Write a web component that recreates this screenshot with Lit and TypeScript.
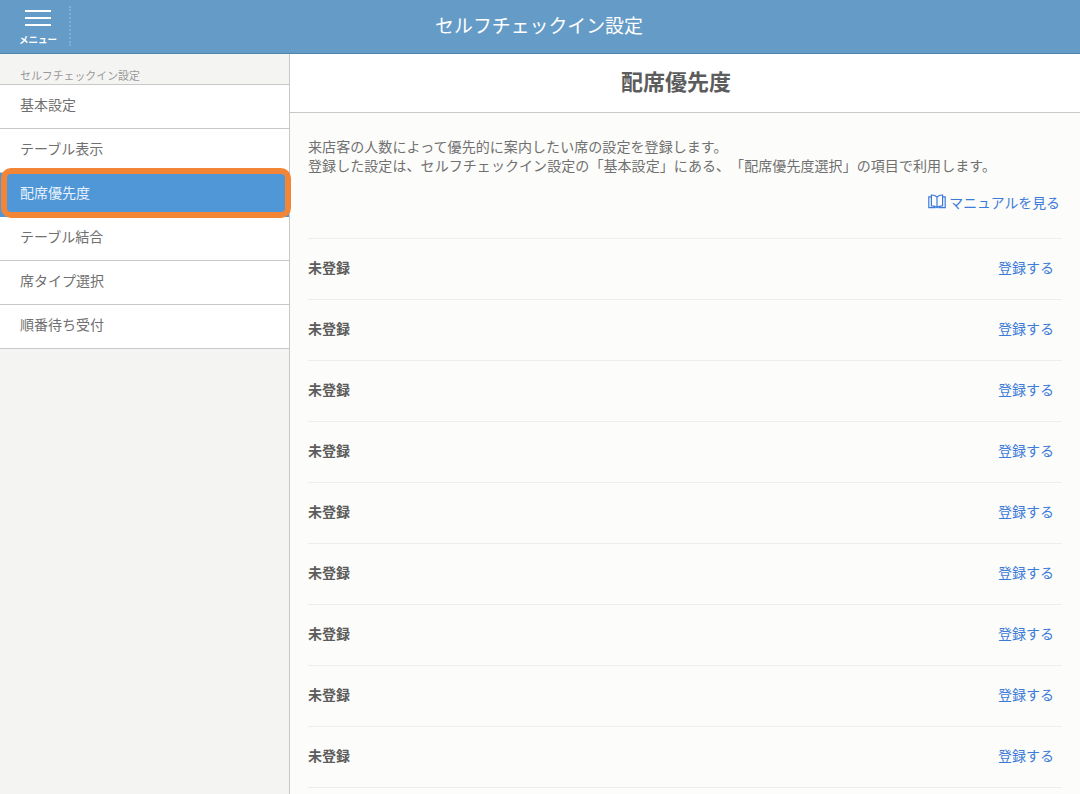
import { LitElement, html, css, svg } from "lit";
import { customElement } from "lit/decorators.js";

const NAV = ["基本設定", "テーブル表示", "配席優先度", "テーブル結合", "席タイプ選択", "順番待ち受付"];
const ROWS = Array.from({ length: 9 }, (_, i) => i);

@customElement("app-root")
export class AppRoot extends LitElement {
  static styles = css`
    :host {
      display: block;
      width: 1080px;
      height: 794px;
      overflow: hidden;
      font-family: "Noto Sans CJK JP", "Liberation Sans", sans-serif;
      text-spacing-trim: space-all;
      color: #555;
      background: #fcfcfa;
    }
    .header {
      height: 54px;
      box-sizing: border-box;
      background: #659cc7;
      border-bottom: 1px solid #4f86b0;
      display: flex;
      align-items: flex-start;
      position: relative;
      color: #fff;
    }
    .menu {
      width: 71px;
      height: 40px;
      margin-top: 6px;
      box-sizing: border-box;
      border-right: 2px dotted #86aecd;
      display: flex;
      flex-direction: column;
      align-items: center;
      padding-left: 7px;
    }
    .bars {
      width: 26px;
      height: 20px;
      margin-top: 4px;
      display: flex;
      flex-direction: column;
      justify-content: space-between;
    }
    .bars i {
      display: block;
      height: 2px;
      background: #fff;
    }
    .menu span {
      font-size: 9.5px;
      line-height: 14px;
      margin-top: 6px;
      font-weight: 700;
      white-space: nowrap;
    }
    .title {
      position: absolute;
      left: 0;
      right: 2px;
      text-align: center;
      font-size: 18.9px;
      line-height: 26px;
      top: 12px;
      color: #fff;
    }
    .body {
      display: flex;
      height: 740px;
    }
    .side {
      width: 290px;
      box-sizing: border-box;
      background: #f4f4f2;
      border-right: 1px solid #c8c8c8;
      flex: none;
    }
    .side h2 {
      margin: 0;
      padding: 13px 0 0 20px;
      font-size: 10.9px;
      line-height: 16px;
      height: 30px;
      box-sizing: border-box;
      font-weight: 400;
      color: #999;
    }
    .side ul {
      list-style: none;
      margin: 0;
      padding: 0;
      border-top: 1px solid #c8c8c8;
    }
    .side li {
      height: 44px;
      box-sizing: border-box;
      background: #fff;
      border-bottom: 1px solid #c8c8c8;
      padding: 0 0 0 20px;
      font-size: 14px;
      line-height: 38px;
      color: #707070;
      position: relative;
    }
    .side li.on {
      background: #5097d8;
      color: #e9f2fa;
      border-bottom: none;
      z-index: 1;
    }
    .side li.on::after {
      content: "";
      position: absolute;
      left: 1px;
      right: -2px;
      top: -5px;
      bottom: -1px;
      box-sizing: border-box;
      border: 6px solid #f28536;
      border-radius: 10px;
      background: #5097d8;
      z-index: 0;
    }
    .side li.on span {
      position: relative;
      z-index: 1;
    }
    .main {
      flex: 1;
      min-width: 0;
    }
    .main h1 {
      margin: 0;
      height: 59px;
      box-sizing: border-box;
      background: #fff;
      border-bottom: 1px solid #c8c8c8;
      text-align: center;
      font-size: 22px;
      line-height: 52px;
      font-weight: 700;
      color: #5c5c5c;
      padding-right: 18px;
    }
    .content {
      padding: 24px 18px 0;
    }
    .desc {
      font-size: 14px;
      letter-spacing: 0.07px;
      line-height: 19px;
      color: #707070;
      margin: 0;
      white-space: nowrap;
    }
    .manual {
      display: flex;
      justify-content: flex-end;
      align-items: center;
      gap: 3px;
      margin-top: 16px;
      height: 24px;
      font-size: 13.9px;
      color: #3d7bd9;
      padding-right: 2px;
    }
    .manual span {
      margin-top: -3px;
    }
    .manual svg {
      display: block;
      width: 18px;
      height: 15px;
      margin-top: -3px;
    }
    .list {
      margin-top: 23px;
      width: 754px;
      border-top: 1px solid #eee;
    }
    .row {
      height: 61px;
      box-sizing: border-box;
      border-bottom: 1px solid #eee;
      display: flex;
      align-items: center;
      justify-content: space-between;
      padding: 0 8px 4px 0;
      font-size: 14px;
    }
    .row b {
      color: #5c5c5c;
      font-weight: 700;
    }
    .row a {
      color: #3d7bd9;
    }
  `;

  private book() {
    return svg`<svg viewBox="0 0 18 15" fill="none" stroke="#3d7bd9" stroke-width="1.2">
      <path d="M9 3.2C7.5 1.4 5.5 .9 3.4 1v10.8c2.2-.1 4.2.4 5.6 1.8 1.4-1.4 3.4-1.9 5.6-1.8V1C12.500.9 10.500 1.400 9 3.200V13.600"/>
      <path d="M3.400 2.800H.8V13.600H7.500M14.600 2.800H17.200V13.600H10.500"/>
    </svg>`;
  }

  render() {
    return html`
      <div class="header">
        <div class="menu">
          <div class="bars"><i></i><i></i><i></i></div>
          <span>メニュー</span>
        </div>
        <div class="title">セルフチェックイン設定</div>
      </div>
      <div class="body">
        <aside class="side">
          <h2>セルフチェックイン設定</h2>
          <ul>
            ${NAV.map((n, i) => html`<li class=${i === 2 ? "on" : ""}><span>${n}</span></li>`)}
          </ul>
        </aside>
        <main class="main">
          <h1>配席優先度</h1>
          <div class="content">
            <p class="desc">来店客の人数によって優先的に案内したい席の設定を登録します。<br />登録した設定は、セルフチェックイン設定の「基本設定」にある、「配席優先度選択」の項目で利用します。</p>
            <div class="manual">${this.book()}<span>マニュアルを見る</span></div>
            <div class="list">
              ${ROWS.map(() => html`<div class="row"><b>未登録</b><a>登録する</a></div>`)}
            </div>
          </div>
        </main>
      </div>
    `;
  }
}
